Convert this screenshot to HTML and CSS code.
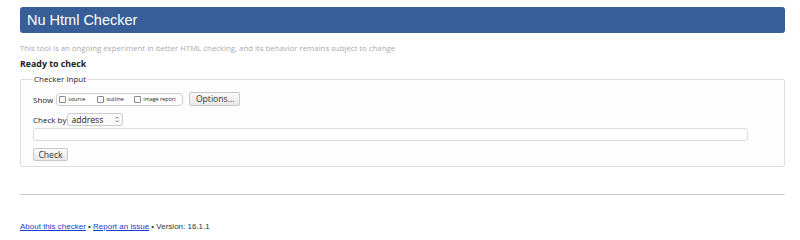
FILE: index.html
```html
<!DOCTYPE html>
<html lang="en">
<head>
    <meta charset="UTF-8">
    <title>Nu Html Checker</title>
    <link rel="stylesheet" href="styles.css">
</head>
<body>
    <h1 class="title">Nu Html Checker</h1>
    <p class="note">This tool is an ongoing experiment in better HTML checking, and its behavior remains subject to change</p>
    <p class="status">Ready to check</p>
    <fieldset class="checker">
        <legend>Checker Input</legend>
        <div class="row show-row">
            <span class="label">Show</span>
            <span class="opts">
                <label class="opt-source"><span class="box"></span>source</label>
                <label class="opt-outline"><span class="box"></span>outline</label>
                <label><span class="box"></span>image report</label>
            </span>
            <button class="btn options">Options...</button>
        </div>
        <div class="row by-row">
            <span class="label">Check by</span>
            <span class="select">address
                <svg class="arrows" width="4" height="7" viewBox="0 0 4 7"><path d="M0.5 2.5 L2 1 L3.5 2.5 M0.5 4.5 L2 6 L3.5 4.5" fill="none" stroke="#666" stroke-width="0.8"/></svg>
            </span>
        </div>
        <div class="url"></div>
        <button class="btn check">Check</button>
    </fieldset>
    <hr class="rule">
    <p class="footer"><a href="#">About this checker</a> &bull; <a href="#">Report an issue</a> &bull; Version: 16.1.1</p>
</body>
</html>
```

FILE: styles.css
```css
body {
    margin: 0;
    padding: 7px 15px 0 20px;
    font-family: "Open Sans", "DejaVu Sans", sans-serif;
    color: #222;
    background: #fff;
}

.title {
    margin: 0;
    height: 26px;
    line-height: 26px;
    padding-left: 7px;
    background: #375e96;
    border-radius: 3px;
    color: #fff;
    font-family: "Liberation Sans", Arial, sans-serif;
    font-size: 14.5px;
    font-weight: normal;
}

.note {
    margin: 9px 0 0;
    height: 12px;
    line-height: 12px;
    font-size: 7.8px;
    color: #aaa;
}

.status {
    margin: 4px 0 0;
    height: 12px;
    line-height: 12px;
    font-size: 8.8px;
    font-weight: bold;
}

.checker {
    margin: 4px 0 0;
    padding: 8px 12px 7px;
    height: 76px;
    border: 1px solid #ddd;
    border-radius: 2px;
    background: #fdfdfd;
}

.checker legend {
    padding: 0 1px;
    font-size: 8px;
    line-height: 10px;
}

.row {
    display: flex;
    align-items: center;
    font-size: 8px;
}

.label {
    margin-right: 3px;
}

.by-row .label {
    margin-right: 1px;
}

.opts {
    display: flex;
    align-items: center;
    gap: 10px;
    height: 11px;
    padding: 0 6px 0 2px;
    border: 1px solid #ccc;
    border-radius: 4px;
    background: #fff;
    font-size: 5.4px;
    white-space: nowrap;
}

.opts label {
    display: flex;
    align-items: center;
    gap: 2px;
}

.opt-source {
    width: 28px;
}

.opt-outline {
    width: 27px;
}

.box {
    width: 5px;
    height: 5px;
    border: 1px solid #888;
    border-radius: 1px;
    background: #fff;
}

.btn {
    height: 14px;
    padding: 0 6px;
    border: 1px solid #c8c8c8;
    border-radius: 2px;
    background: linear-gradient(#fafafa, #e8e8e8);
    color: #333;
    font-family: "Open Sans", "DejaVu Sans", sans-serif;
    font-size: 8.6px;
}

.options {
    margin-left: 6px;
    width: 51px;
}

.by-row {
    margin-top: 7px;
}

.select {
    display: flex;
    align-items: center;
    justify-content: space-between;
    width: 48px;
    height: 11px;
    padding: 0 3px;
    border: 1px solid #ccc;
    border-radius: 3px;
    background: #fafafa;
    font-size: 8.6px;
}

.url {
    width: 713px;
    height: 11px;
    margin-top: 2px;
    border: 1px solid #ddd;
    border-radius: 3px;
    background: #fff;
}

.check {
    margin-top: 3px;
    height: 13px;
    width: 35px;
    padding: 0;
}

.rule {
    margin: 27px 0 0;
    border: 0;
    border-top: 1px solid #ccc;
}

.footer {
    margin: 27px 0 0;
    font-family: "Liberation Sans", Arial, sans-serif;
    font-size: 8px;
    color: #333;
}

.footer a {
    color: #1a3ccc;
}
```
